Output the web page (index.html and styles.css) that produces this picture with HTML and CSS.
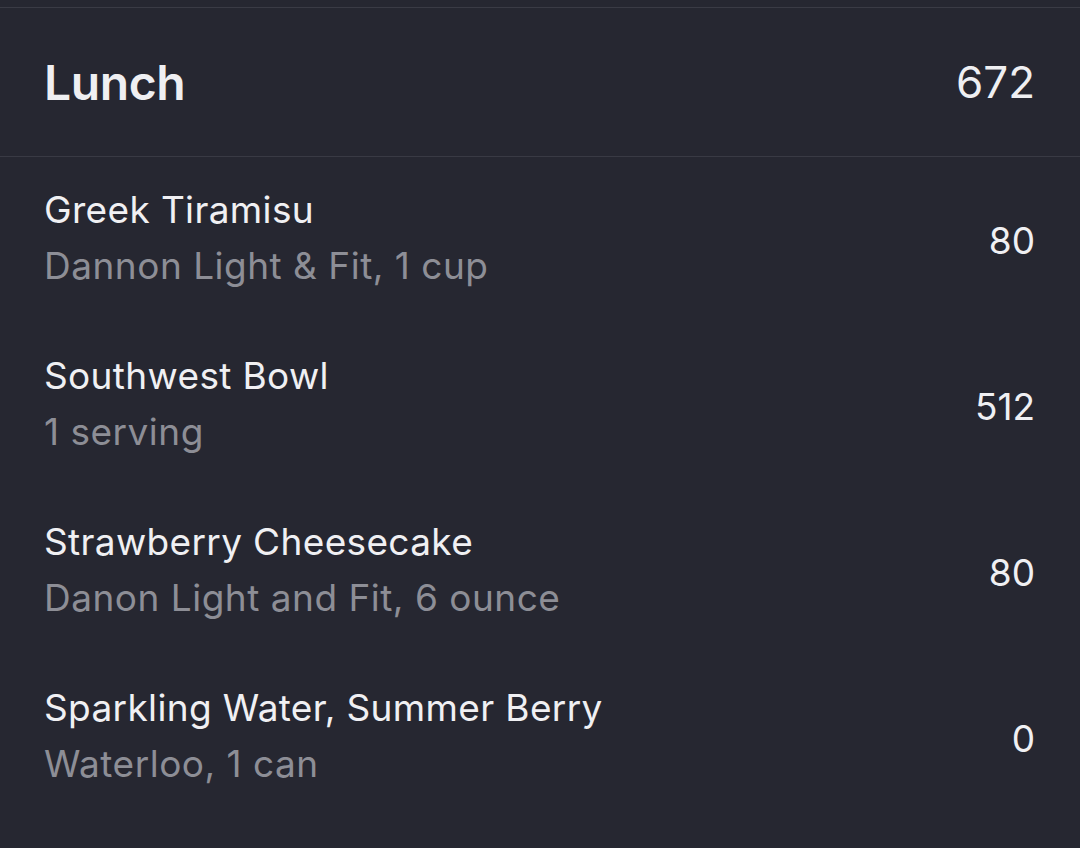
FILE: index.html
```html
<!DOCTYPE html>
<html>
<head>
<meta charset="utf-8">
<link rel="stylesheet" href="styles.css">
</head>
<body>
<div class="screen">
  <div class="topline"></div>
  <div class="header">
    <span class="meal">Lunch</span>
    <span class="total">672</span>
  </div>
  <ul class="items">
    <li class="item">
      <div class="info">
        <div class="name">Greek Tiramisu</div>
        <div class="detail">Dannon Light &amp; Fit, 1 cup</div>
      </div>
      <div class="cal">80</div>
    </li>
    <li class="item">
      <div class="info">
        <div class="name">Southwest Bowl</div>
        <div class="detail">1 serving</div>
      </div>
      <div class="cal">512</div>
    </li>
    <li class="item">
      <div class="info">
        <div class="name">Strawberry Cheesecake</div>
        <div class="detail">Danon Light and Fit, 6 ounce</div>
      </div>
      <div class="cal">80</div>
    </li>
    <li class="item">
      <div class="info">
        <div class="name">Sparkling Water, Summer Berry</div>
        <div class="detail">Waterloo, 1 can</div>
      </div>
      <div class="cal">0</div>
    </li>
  </ul>
</div>
</body>
</html>
```
FILE: styles.css
```css
html, body {
  margin: 0;
  padding: 0;
  background: #262731;
}
.screen {
  width: 1080px;
  height: 848px;
  overflow: hidden;
  background: #262731;
  font-family: Inter, "Noto Sans", sans-serif;
  color: #efeff2;
}
.topline {
  height: 7px;
  border-bottom: 1px solid #3a3b45;
}
.header {
  height: 148px;
  border-bottom: 1px solid #393a44;
  display: flex;
  align-items: center;
  justify-content: space-between;
  padding: 0 45px 0 44px;
}
.meal {
  font-size: 48px;
  font-weight: 600;
  letter-spacing: -0.4px;
}
.total {
  font-size: 44px;
  font-weight: 400;
}
.items {
  list-style: none;
  margin: 0;
  padding: 0;
}
.item {
  height: 166px;
  display: flex;
  align-items: center;
  justify-content: space-between;
  padding: 0 45px 0 44px;
}
.info {
  display: flex;
  flex-direction: column;
  gap: 11px;
  margin-top: -6px;
}
.name {
  font-size: 37px;
  line-height: 45px;
  letter-spacing: 0.35px;
  color: #f0f0f3;
}
.detail {
  font-size: 37px;
  line-height: 45px;
  letter-spacing: 0.5px;
  color: #8d8e96;
}
.cal {
  font-size: 37px;
  color: #f0f0f3;
}
```
